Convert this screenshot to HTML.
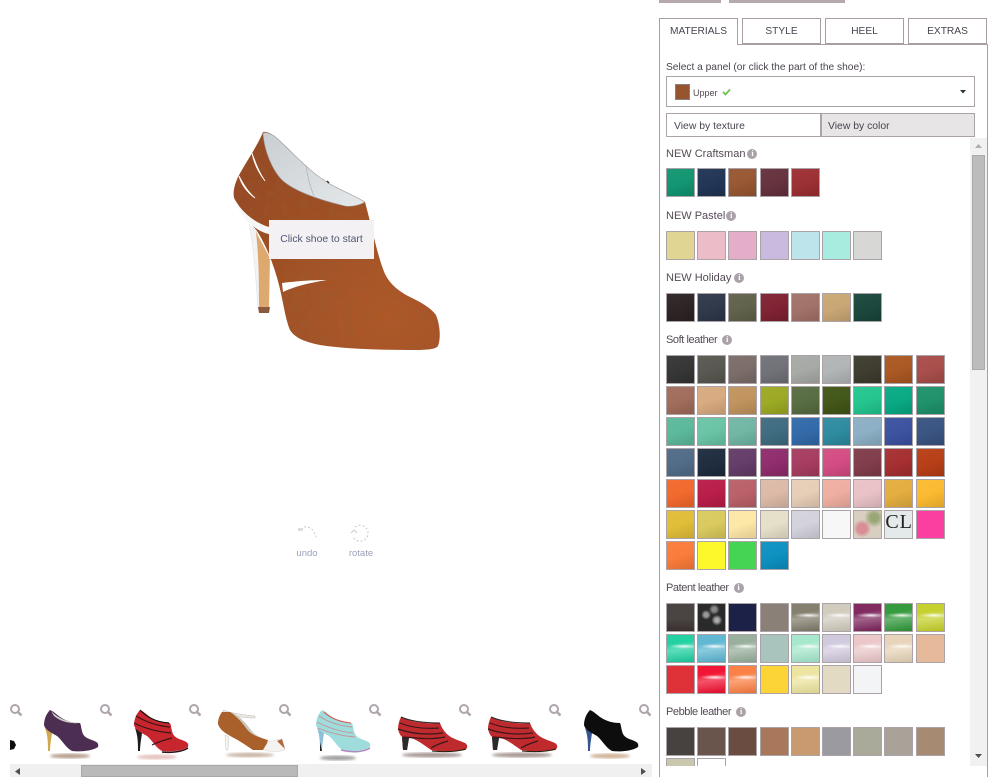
<!DOCTYPE html>
<html><head><meta charset="utf-8"><title>Shoe designer</title>
<style>
html,body{margin:0;padding:0;background:#fff}
body{width:988px;height:777px;position:relative;overflow:hidden;font-family:"Liberation Sans",sans-serif;color:#544a55;font-size:11px}
.a{position:absolute}
.tab{position:absolute;top:18px;width:79px;height:26px;box-sizing:border-box;border:1px solid #a89ea3;text-align:center;line-height:25px;font-size:10.2px;color:#4a4350;background:#fff}
.h{position:absolute;left:6px;display:flex;align-items:center;font-size:11px;line-height:14px;color:#544a55;white-space:nowrap}
.n{letter-spacing:-.42px}
.i{display:inline-block;width:10px;height:10px;border-radius:50%;background:#aaa2a8;color:#fff;font:bold 8px/10px "Liberation Serif",serif;text-align:center;letter-spacing:0;margin-left:3px}
.n .i{margin-left:5px}
.g{position:absolute;left:6px;width:290px;display:flex;flex-wrap:wrap;column-gap:2.2px;row-gap:2px}
.g div{width:29px;height:29px;box-sizing:border-box;border:1.5px solid #aca3a8;position:relative;overflow:hidden}
.s{background-image:linear-gradient(160deg,rgba(255,255,255,.05) 0%,rgba(255,255,255,.02) 50%,rgba(0,0,0,.12) 100%)}
.p{background-image:radial-gradient(ellipse 55% 9% at 62% 42%,rgba(255,255,255,.9),rgba(255,255,255,0)),linear-gradient(172deg,rgba(255,255,255,.05) 30%,rgba(255,255,255,.3) 52%,rgba(0,0,0,.08) 100%)}
</style></head><body>

<div class="a" style="left:659px;top:0;width:62px;height:3px;background:#b5a9ae"></div>
<div class="a" style="left:729px;top:0;width:116px;height:3px;background:#b5a9ae"></div>

<!-- main shoe -->
<svg class="a" style="left:0;top:0" width="650" height="700" viewBox="0 0 650 700">
<defs>
<filter id="t" x="0" y="0" width="100%" height="100%"><feTurbulence type="fractalNoise" baseFrequency=".11" numOctaves="3" seed="4"/><feColorMatrix values="0 0 0 0 .3  0 0 0 0 .12  0 0 0 0 .03  0 0 0 .7 -.3"/><feComposite in2="SourceGraphic" operator="in"/><feMerge><feMergeNode in="SourceGraphic"/><feMergeNode/></feMerge></filter>
<radialGradient id="br" cx=".75" cy=".85" r=".9"><stop offset="0" stop-color="#ae592c"/><stop offset=".6" stop-color="#a05128"/><stop offset="1" stop-color="#974b25"/></radialGradient>
<linearGradient id="ln" x1="0" y1="0" x2="1" y2="1"><stop offset="0" stop-color="#c9ced2"/><stop offset="1" stop-color="#e4e8ea"/></linearGradient>
<filter id="sm"><feGaussianBlur stdDeviation=".3"/></filter>
</defs>
<path d="M249 224 C253 240,256 280,258 308 L261 308 L259 262 L257 232 Z" fill="#f1f3f5" stroke="#d3d6da" stroke-width=".4"/>
<path d="M256 232 L270 258 L269 307 L259 307 C259 285,259 260,256 232 Z" fill="#dda96f"/>
<path d="M258 307 L270 307 L269 313 L259 313 Z" fill="#8a5a3e"/>
<path d="M263 132 C258 145,246 162,238 177 C234 186,233 192,234 198 C238 208,250 222,257 231 C266 245,274 265,279 285 C283 300,285 318,290 330 C295 338,305 342,320 345 C345 349,380 350,415 350 C428 350,436 349,438 346 C441 338,440 325,436 315 C430 307,420 302,410 297 C398 291,390 284,385 274 C378 258,372 228,365 202 C350 193,335 188,327 182 C310 172,295 155,283 144 C277 138,270 131,263 132 Z" fill="url(#br)" filter="url(#t)"/>
<path d="M263 133 C264 150,272 170,282 180 C295 192,320 200,345 206 C352 207,360 205,365 202 C350 193,335 188,327 182 C310 172,295 155,283 144 C277 138,270 131,263 133 Z" fill="url(#ln)" stroke="#9d9590" stroke-width=".6"/>
<path d="M306 165 Q308 182 314 196" fill="none" stroke="#a5a9ac" stroke-width=".6"/>
<path d="M327 181 l2 2" stroke="#333" stroke-width="1.4"/>
<path d="M234 197 C238 208,252 222,269 227 L269 234 C254 231,240 216,234 197 Z" fill="#f4f6f8"/>
<path d="M252 153 C256 165,260 174,265 181 C259 173,254 164,252 153 Z" fill="#fff" stroke="#fff" stroke-width=".9"/>
<path d="M239 176 C244 186,249 193,255 198 C248 193,242 186,239 176 Z" fill="#fff" stroke="#fff" stroke-width=".9"/>
<path d="M282 283 C298 281,312 280,327 280 C308 283,293 287,283 292 Z" fill="#fff"/>
<g filter="url(#sm)">
<g fill="none" stroke="#c9cdd4" stroke-width="1.1" stroke-dasharray="2 2">
<path d="M304 527 Q313 526 316 537"/>
<path d="M355 527 A8 8 0 1 1 353 537"/>
</g>
<rect x="298" y="528" width="5" height="3" fill="#dcdee2"/>
<path d="M351 533 l3 -3 l3 3" fill="none" stroke="#c9cdd4"/>
</g>
</svg>

<div class="a" style="left:269px;top:220px;width:105px;height:39px;background:#f3f1f3;text-align:center;line-height:40px;font-size:10.4px;color:#4f5670">Click shoe to start</div>
<div class="a" style="left:290px;top:548px;width:34px;text-align:center;font-size:9.5px;color:#9ba1ba">undo</div>
<div class="a" style="left:344px;top:548px;width:34px;text-align:center;font-size:9.5px;color:#9ba1ba">rotate</div>

<!-- thumbnails -->
<svg class="a" style="left:0;top:700px" width="655" height="64" viewBox="0 700 655 64">
<defs>
<path id="up" d="M50 710 C46 714,44 720,44 725 C45 730,52 733,57 736 C62 740,66 748,72 751 C80 752,92 751,98 747 C99 743,97 742,92 740 C86 738,83 736,82 731 C81 727,81 725,80 723 C72 723,66 721,60 717 C56 714,53 711,50 710 Z"/>
<path id="hl" d="M45 728 L52 733 C51 740,50 746,50 751 L48 751 C48 744,48 736,45 728 Z"/>
<path id="lo" d="M401 717 C399 721,398 725,398 729 C399 733,400 735,402 737 L403 750 L407 750 L409 738 C415 738,424 745,431 750 C440 752,456 752,465 750 C468 748,468 745,465 743 C458 740,450 738,446 733 C443 730,441 726,440 723 C432 724,424 723,417 722 C411 721,405 719,401 717 Z"/>
<g id="mg" fill="none" stroke="#aea5ad" stroke-width="2"><circle cx="0" cy="0" r="4"/><path d="M3 3 L6.5 6.5" stroke-width="2.6"/></g>
<filter id="b"><feGaussianBlur stdDeviation="1.3"/></filter>
<filter id="sf"><feGaussianBlur stdDeviation=".35"/></filter>
</defs>
<g filter="url(#sf)">
<g transform="translate(15 709)"><use href="#mg"/></g>
<g transform="translate(105 709)"><use href="#mg"/></g>
<g transform="translate(194 709)"><use href="#mg"/></g>
<g transform="translate(284 709)"><use href="#mg"/></g>
<g transform="translate(374 709)"><use href="#mg"/></g>
<g transform="translate(464 709)"><use href="#mg"/></g>
<g transform="translate(554 709)"><use href="#mg"/></g>
<g transform="translate(644 709)"><use href="#mg"/></g>

<path d="M10 740 L14 741 L16 745 L14 749 L10 750 Z" fill="#111"/>

<!-- 1 purple -->
<ellipse cx="70" cy="756" rx="20" ry="2.5" fill="#b8a090" filter="url(#b)"/>
<use href="#hl" fill="#cfa94f"/><use href="#up" fill="#4e2d52"/>
<path d="M51 711 C56 716,64 722,79 723 C69 724,60 721,54 716 Z" fill="#cfcfc8"/>

<!-- 2 red -->
<g transform="translate(90 0)">
<ellipse cx="67" cy="757" rx="20" ry="2.5" fill="#e6c2bf" filter="url(#b)"/>
<use href="#hl" fill="#1c1a1a"/><use href="#up" fill="#c8282f"/>
<path d="M46 716 C56 722,68 726,80 727 M44 723 C56 729,70 732,81 733 M62 745 C68 742,74 740,82 738" stroke="#3a1518" stroke-width="1.2" fill="none"/>
<path d="M72 752 C80 753,92 752,98 748" stroke="#2a1416" stroke-width="1.4" fill="none"/>
<path d="M50 710 C56 716,64 722,79 723" stroke="#111" stroke-width="1.2" fill="none"/>
</g>

<!-- 3 sandal -->
<ellipse cx="250" cy="755" rx="24" ry="2.2" fill="#c9b3a2" filter="url(#b)"/>
<path d="M225 735 L226 750 L228 750 L229 737 Z" fill="#f6f3ee" stroke="#bbb" stroke-width=".4"/>
<path d="M223 710 C234 714,245 715,255 716 L255 718 C243 718,232 716,223 713 Z" fill="#eeeae2" stroke="#aaa" stroke-width=".4"/>
<path d="M222 712 C219 716,218 720,218 724 C220 730,225 733,232 737 C240 741,247 746,253 750 L265 750 C266 746,267 743,268 740 C260 738,254 735,250 729 C245 722,238 715,230 712 Z" fill="#a9602a"/>
<path d="M230 712 C238 715,245 722,250 729 C254 735,260 738,268 739 C258 738,250 734,246 728 C241 721,236 716,230 712 Z" fill="#c9c9bf"/>
<path d="M263 750 C270 752,280 752,285 750 C284 746,283 742,282 739 C278 739,272 741,268 742 Z" fill="#f5f3ef" stroke="#ccc" stroke-width=".4"/>
<path d="M277 741 L282 739 L285 749 Z" fill="#b5673a"/>

<!-- 4 aqua -->
<g transform="translate(272 0)">
<ellipse cx="66" cy="758" rx="18" ry="2.5" fill="#a0a0a0" filter="url(#b)"/>
<use href="#hl" fill="#8fc0d8"/><path d="M48 742 L48 751 L50 751 Z" fill="#222"/>
<use href="#up" fill="#9fdcdc"/>
<path d="M47 716 C56 722,68 726,80 727 M45 722 C56 728,70 732,81 733 M46 728 C58 733,70 736,83 737" stroke="#c98f96" stroke-width=".9" fill="none"/>
<path d="M52 712 C58 718,68 722,79 723" stroke="#d9534f" stroke-width="1" fill="none"/>
<path d="M69 750 C80 753,92 752,98 748" stroke="#b08ac0" stroke-width="1.5" fill="none"/>
</g>

<!-- 5,6 red low -->
<g id="l5">
<ellipse cx="432" cy="755" rx="30" ry="2.5" fill="#a89896" filter="url(#b)"/>
<use href="#lo" fill="#bf2c2e"/>
<path d="M402 737 L403 750 L407 750 L409 738 Z" fill="#2a2a2a"/>
<path d="M400 723 C412 728,425 729,439 728 M398 729 C412 734,428 735,443 733 M403 737 C418 738,430 740,445 737 M431 748 C436 745,441 743,448 741" stroke="#3a181a" stroke-width="1.2" fill="none"/>
<path d="M401 717 C410 721,424 723,440 723" stroke="#222" stroke-width="1" fill="none"/>
<path d="M432 751 C443 752,456 752,466 749" stroke="#221" stroke-width="1.1" fill="none"/>
</g>
<use href="#l5" x="90"/>

<!-- 7 black -->
<g transform="translate(540 0)">
<ellipse cx="70" cy="756" rx="20" ry="2.5" fill="#d0b498" filter="url(#b)"/>
<use href="#hl" fill="#35558f"/><use href="#up" fill="#0c0c0c"/>
</g>
</g>
</svg>

<!-- horizontal scrollbar -->
<div class="a" style="left:10px;top:764px;width:642px;height:13px;background:#f0f0f0"></div>
<div class="a" style="left:81px;top:765px;width:217px;height:12px;box-sizing:border-box;background:#b9b9b9;border:1px solid #a8a8a8"></div>
<svg class="a" style="left:15px;top:768px" width="6" height="8"><path d="M5 0 V7 L0 3.5 Z" fill="#505050"/></svg>
<svg class="a" style="left:641px;top:768px" width="6" height="8"><path d="M0 0 V7 L5 3.5 Z" fill="#505050"/></svg>

<!-- right panel -->
<div class="a" style="left:659px;top:44px;width:329px;height:733px;box-sizing:border-box;border:1px solid #a89ea3;border-bottom:0"></div>
<div class="tab" style="left:659px;height:27px;border-bottom:0">MATERIALS</div>
<div class="tab" style="left:742px">STYLE</div>
<div class="tab" style="left:825px">HEEL</div>
<div class="tab" style="left:908px">EXTRAS</div>

<div class="a" style="left:666px;top:61px;font-size:10.2px;line-height:14px;color:#4a4350;white-space:nowrap">Select a panel (or click the part of the shoe):</div>
<div class="a" style="left:666px;top:76px;width:309px;height:31px;box-sizing:border-box;border:1px solid #aca3a8"></div>
<div class="a" style="left:675px;top:84px;width:15px;height:16px;box-sizing:border-box;background:#96552f;border:1px solid #8a7f80"></div>
<div class="a" style="left:693px;top:87px;font-size:9px;line-height:12px;color:#544a55">Upper</div>
<svg class="a" style="left:722px;top:88px" width="9" height="8"><path d="M1 4 L3.5 6.5 L8 1.5" fill="none" stroke="#6cc24a" stroke-width="1.8"/></svg>
<svg class="a" style="left:960px;top:90px" width="7" height="4"><path d="M0 0 H6 L3 3.5 Z" fill="#333"/></svg>

<div class="a" style="left:666px;top:113px;width:155px;height:24px;box-sizing:border-box;border:1px solid #aca3a8;line-height:25px;padding-left:7px;font-size:10.4px;color:#4a4350">View by texture</div>
<div class="a" style="left:821px;top:113px;width:154px;height:24px;box-sizing:border-box;border:1px solid #aca3a8;background:#e8e5e7;line-height:25px;padding-left:6px;font-size:10.4px;color:#4a4350">View by color</div>

<!-- vertical scrollbar -->
<div class="a" style="left:970px;top:138px;width:17px;height:628px;background:#f1f1f1"></div>
<div class="a" style="left:972px;top:155px;width:13px;height:215px;box-sizing:border-box;background:#bcbcbc;border:1px solid #aaa"></div>
<svg class="a" style="left:975px;top:144px" width="8" height="5"><path d="M0 4 H7 L3.5 0 Z" fill="#b0b0b0"/></svg>
<svg class="a" style="left:975px;top:754px" width="8" height="5"><path d="M0 0 H7 L3.5 4 Z" fill="#505050"/></svg>

<div class="a" style="left:660px;top:138px;width:310px;height:628px;overflow:hidden">
<div class="h" style="top:9px">NEW Craftsman<span class="i" style="margin-left:2px">i</span></div>
<div class="g" style="top:30px">
<div class="s" style="background-color:#0f9470"></div><div class="s" style="background-color:#1f3253"></div><div class="s" style="background-color:#96552f"></div><div class="s" style="background-color:#632f3b"></div><div class="s" style="background-color:#9b2d31"></div>
</div>
<div class="h" style="top:71px">NEW Pastel<span class="i" style="margin-left:1px">i</span></div>
<div class="g" style="top:93px">
<div style="background:#e0d592"></div><div style="background:#ecbcc8"></div><div style="background:#e4adc8"></div><div style="background:#c9bbe0"></div><div style="background:#bce4ea"></div><div style="background:#a8ecdf"></div><div style="background:#d7d7d5"></div>
</div>
<div class="h" style="top:133px">NEW Holiday<span class="i">i</span></div>
<div class="g" style="top:155px">
<div class="s" style="background-color:#2a2122"></div><div class="s" style="background-color:#2c3648"></div><div class="s" style="background-color:#5e6048"></div><div class="s" style="background-color:#7e1f30"></div><div class="s" style="background-color:#a07066"></div><div class="s" style="background-color:#c9a672"></div><div class="s" style="background-color:#17453a"></div>
</div>
<div class="h n" style="top:195px">Soft leather<span class="i">i</span></div>
<div class="g" style="top:217px">
<div class="s" style="background-color:#333"></div><div class="s" style="background-color:#56564f"></div><div class="s" style="background-color:#7a6b67"></div><div class="s" style="background-color:#6f7077"></div><div class="s" style="background-color:#a5a8a5"></div><div class="s" style="background-color:#b0b4b4"></div><div class="s" style="background-color:#3b3a2c"></div><div class="s" style="background-color:#a9561f"></div><div class="s" style="background-color:#a74b48"></div>
<div class="s" style="background-color:#a06a59"></div><div class="s" style="background-color:#d7a97e"></div><div class="s" style="background-color:#c0925c"></div><div class="s" style="background-color:#9aa821"></div><div class="s" style="background-color:#566a40"></div><div class="s" style="background-color:#3f5415"></div><div class="s" style="background-color:#21c48e"></div><div class="s" style="background-color:#05a882"></div><div class="s" style="background-color:#1c9068"></div>
<div class="s" style="background-color:#5ab89a"></div><div class="s" style="background-color:#68c3a5"></div><div class="s" style="background-color:#6fb5a3"></div><div class="s" style="background-color:#3d6a7f"></div><div class="s" style="background-color:#2f68a8"></div><div class="s" style="background-color:#2b8a9f"></div><div class="s" style="background-color:#8aaec4"></div><div class="s" style="background-color:#39509f"></div><div class="s" style="background-color:#375280"></div>
<div class="s" style="background-color:#4f6a86"></div><div class="s" style="background-color:#1c2a3c"></div><div class="s" style="background-color:#623a66"></div><div class="s" style="background-color:#8e2a6b"></div><div class="s" style="background-color:#a53a5f"></div><div class="s" style="background-color:#d34a81"></div><div class="s" style="background-color:#7f3a48"></div><div class="s" style="background-color:#a42c2e"></div><div class="s" style="background-color:#b73c13"></div>
<div class="s" style="background-color:#f2672a"></div><div class="s" style="background-color:#b81a45"></div><div class="s" style="background-color:#b95e66"></div><div class="s" style="background-color:#dcb9a6"></div><div class="s" style="background-color:#e6cdb6"></div><div class="s" style="background-color:#efada0"></div><div class="s" style="background-color:#e9c1c6"></div><div class="s" style="background-color:#e3ac3c"></div><div class="s" style="background-color:#fbb92e"></div>
<div class="s" style="background-color:#e0bd36"></div><div class="s" style="background-color:#d9c95c"></div><div class="s" style="background-color:#fde7a6"></div><div class="s" style="background-color:#e5dfc8"></div><div class="s" style="background-color:#d3d2dc"></div><div style="background:#f7f7f7"></div>
<div style="background:radial-gradient(circle at 30% 65%,#d98e95 0 18%,transparent 35%),radial-gradient(circle at 75% 25%,#9aa878 0 15%,transparent 35%),#d8cfc0"></div>
<div style="background:#e4e9e9;font:20px/22px 'Liberation Serif',serif;color:#222;white-space:nowrap;text-align:left;letter-spacing:1px">CL</div>
<div style="background:#fb3fa1"></div>
<div class="s" style="background-color:#fb7a38"></div><div style="background:#fcf82c"></div><div style="background:#46d552"></div><div class="s" style="background-color:#0a8fc0"></div>
</div>
<div class="h n" style="top:443px">Patent leather<span class="i">i</span></div>
<div class="g" style="top:465px">
<div style="background:linear-gradient(#4a4542 55%,#39302e)"></div><div style="background:radial-gradient(circle at 30% 40%,#999 0 8%,transparent 20%),radial-gradient(circle at 70% 60%,#aaa 0 8%,transparent 22%),radial-gradient(circle at 60% 20%,#888 0 8%,transparent 20%),#2a2a2a"></div><div style="background:#1b2147"></div><div style="background:#8a8078"></div><div class="p" style="background-color:#7d7866"></div><div class="p" style="background-color:#cfc9ba"></div><div class="p" style="background-color:#7a2058"></div><div class="p" style="background-color:#2a9634"></div><div class="p" style="background-color:#c3cf24"></div>
<div class="p" style="background-color:#18cf9e"></div><div class="p" style="background-color:#58b4d0"></div><div class="p" style="background-color:#94ac98"></div><div style="background:#a9c4bc"></div><div class="p" style="background-color:#a2e6ca"></div><div class="p" style="background-color:#cfc7dc"></div><div class="p" style="background-color:#eac4c6"></div><div class="p" style="background-color:#e6d2b6"></div><div style="background:#e5b99a"></div>
<div style="background:#df3238"></div><div class="p" style="background-color:#f00a2a"></div><div class="p" style="background-color:#fb7a3c"></div><div style="background:#fdd436"></div><div class="p" style="background-color:#ebe39a"></div><div style="background:#e2dac2"></div><div style="background:#f3f4f6"></div>
</div>
<div class="h n" style="top:567px">Pebble leather<span class="i">i</span></div>
<div class="g" style="top:589px">
<div style="background:#47423f"></div><div style="background:#6a554c"></div><div style="background:#6b4c40"></div><div style="background:#a9785a"></div><div style="background:#c99a70"></div><div style="background:#9a9aa0"></div><div style="background:#a9aa9a"></div><div style="background:#a8a298"></div><div style="background:#a68b72"></div>
<div style="background:#c9c8ae"></div><div style="background:#fff"></div>
</div>
</div>
</body></html>
